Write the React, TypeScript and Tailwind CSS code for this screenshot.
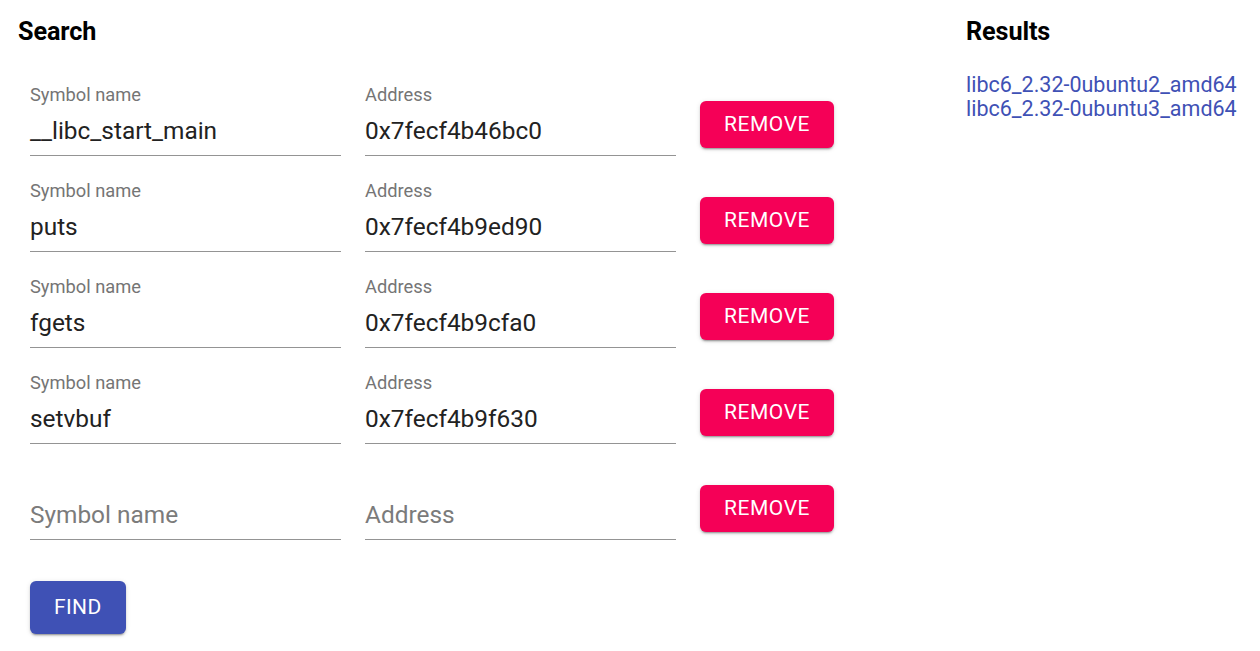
import React from "react";

const rows = [
  { name: "__libc_start_main", addr: "0x7fecf4b46bc0" },
  { name: "puts", addr: "0x7fecf4b9ed90" },
  { name: "fgets", addr: "0x7fecf4b9cfa0" },
  { name: "setvbuf", addr: "0x7fecf4b9f630" },
];

const shadow =
  "shadow-[0_3px_1px_-2px_rgba(0,0,0,0.2),0_2px_2px_0_rgba(0,0,0,0.14),0_1px_5px_0_rgba(0,0,0,0.12)]";

function Field({ label, value, placeholder }: { label?: string; value?: string; placeholder?: string }) {
  return (
    <div className="flex w-[311px] flex-col">
      <div className="h-[24px] pt-[2px] text-[18.3px] leading-[18px] text-[#757575]">{label ?? ""}</div>
      <div className="h-[48px] border-b border-[#949494] pt-[9px] text-[24.4px] leading-[28.5px]">
        {value ? (
          <span className="text-[#222222]">{value}</span>
        ) : (
          <span className="text-[#7b7b7b]">{placeholder}</span>
        )}
      </div>
    </div>
  );
}

function RemoveButton() {
  return (
    <button
      className={`mt-[17px] flex h-[47px] items-center rounded-[6px] bg-[#f50057] px-[24px] text-[21px] font-normal tracking-[0.55px] text-white ${shadow}`}
    >
      REMOVE
    </button>
  );
}

export default function App() {
  return (
    <div
      className="flex min-h-[651px] w-[1260px] bg-white"
      style={{ fontFamily: "Roboto, 'Noto Sans', sans-serif" }}
    >
      <div className="flex w-[966px] flex-col pl-[18px] pt-[16px]">
        <h1 className="h-[32px] text-[25.2px] font-bold leading-[32px] tracking-[-0.1px] text-black">Search</h1>
        <div className="mt-[36px] flex flex-col gap-[24px] pl-[12px]">
          {rows.map((r, i) => (
            <div key={i} className="flex items-start gap-[24px]">
              <Field label="Symbol name" value={r.name} />
              <Field label="Address" value={r.addr} />
              <RemoveButton />
            </div>
          ))}
          <div className="flex items-start gap-[24px]">
            <Field placeholder="Symbol name" />
            <Field placeholder="Address" />
            <RemoveButton />
          </div>
        </div>
        <div className="mt-[41px] pl-[12px]">
          <button
            className={`flex h-[53px] items-center rounded-[6px] bg-[#3f51b5] px-[24px] text-[21px] font-normal tracking-[0.4px] text-white ${shadow}`}
          >
            FIND
          </button>
        </div>
      </div>
      <div className="flex flex-col pt-[16px]">
        <h2 className="h-[32px] text-[25.2px] font-bold leading-[32px] tracking-[-0.1px] text-black">Results</h2>
        <div className="mt-[25px] flex flex-col text-[21.5px] leading-[24px] text-[#3f51b5]">
          <a>libc6_2.32-0ubuntu2_amd64</a>
          <a>libc6_2.32-0ubuntu3_amd64</a>
        </div>
      </div>
    </div>
  );
}
